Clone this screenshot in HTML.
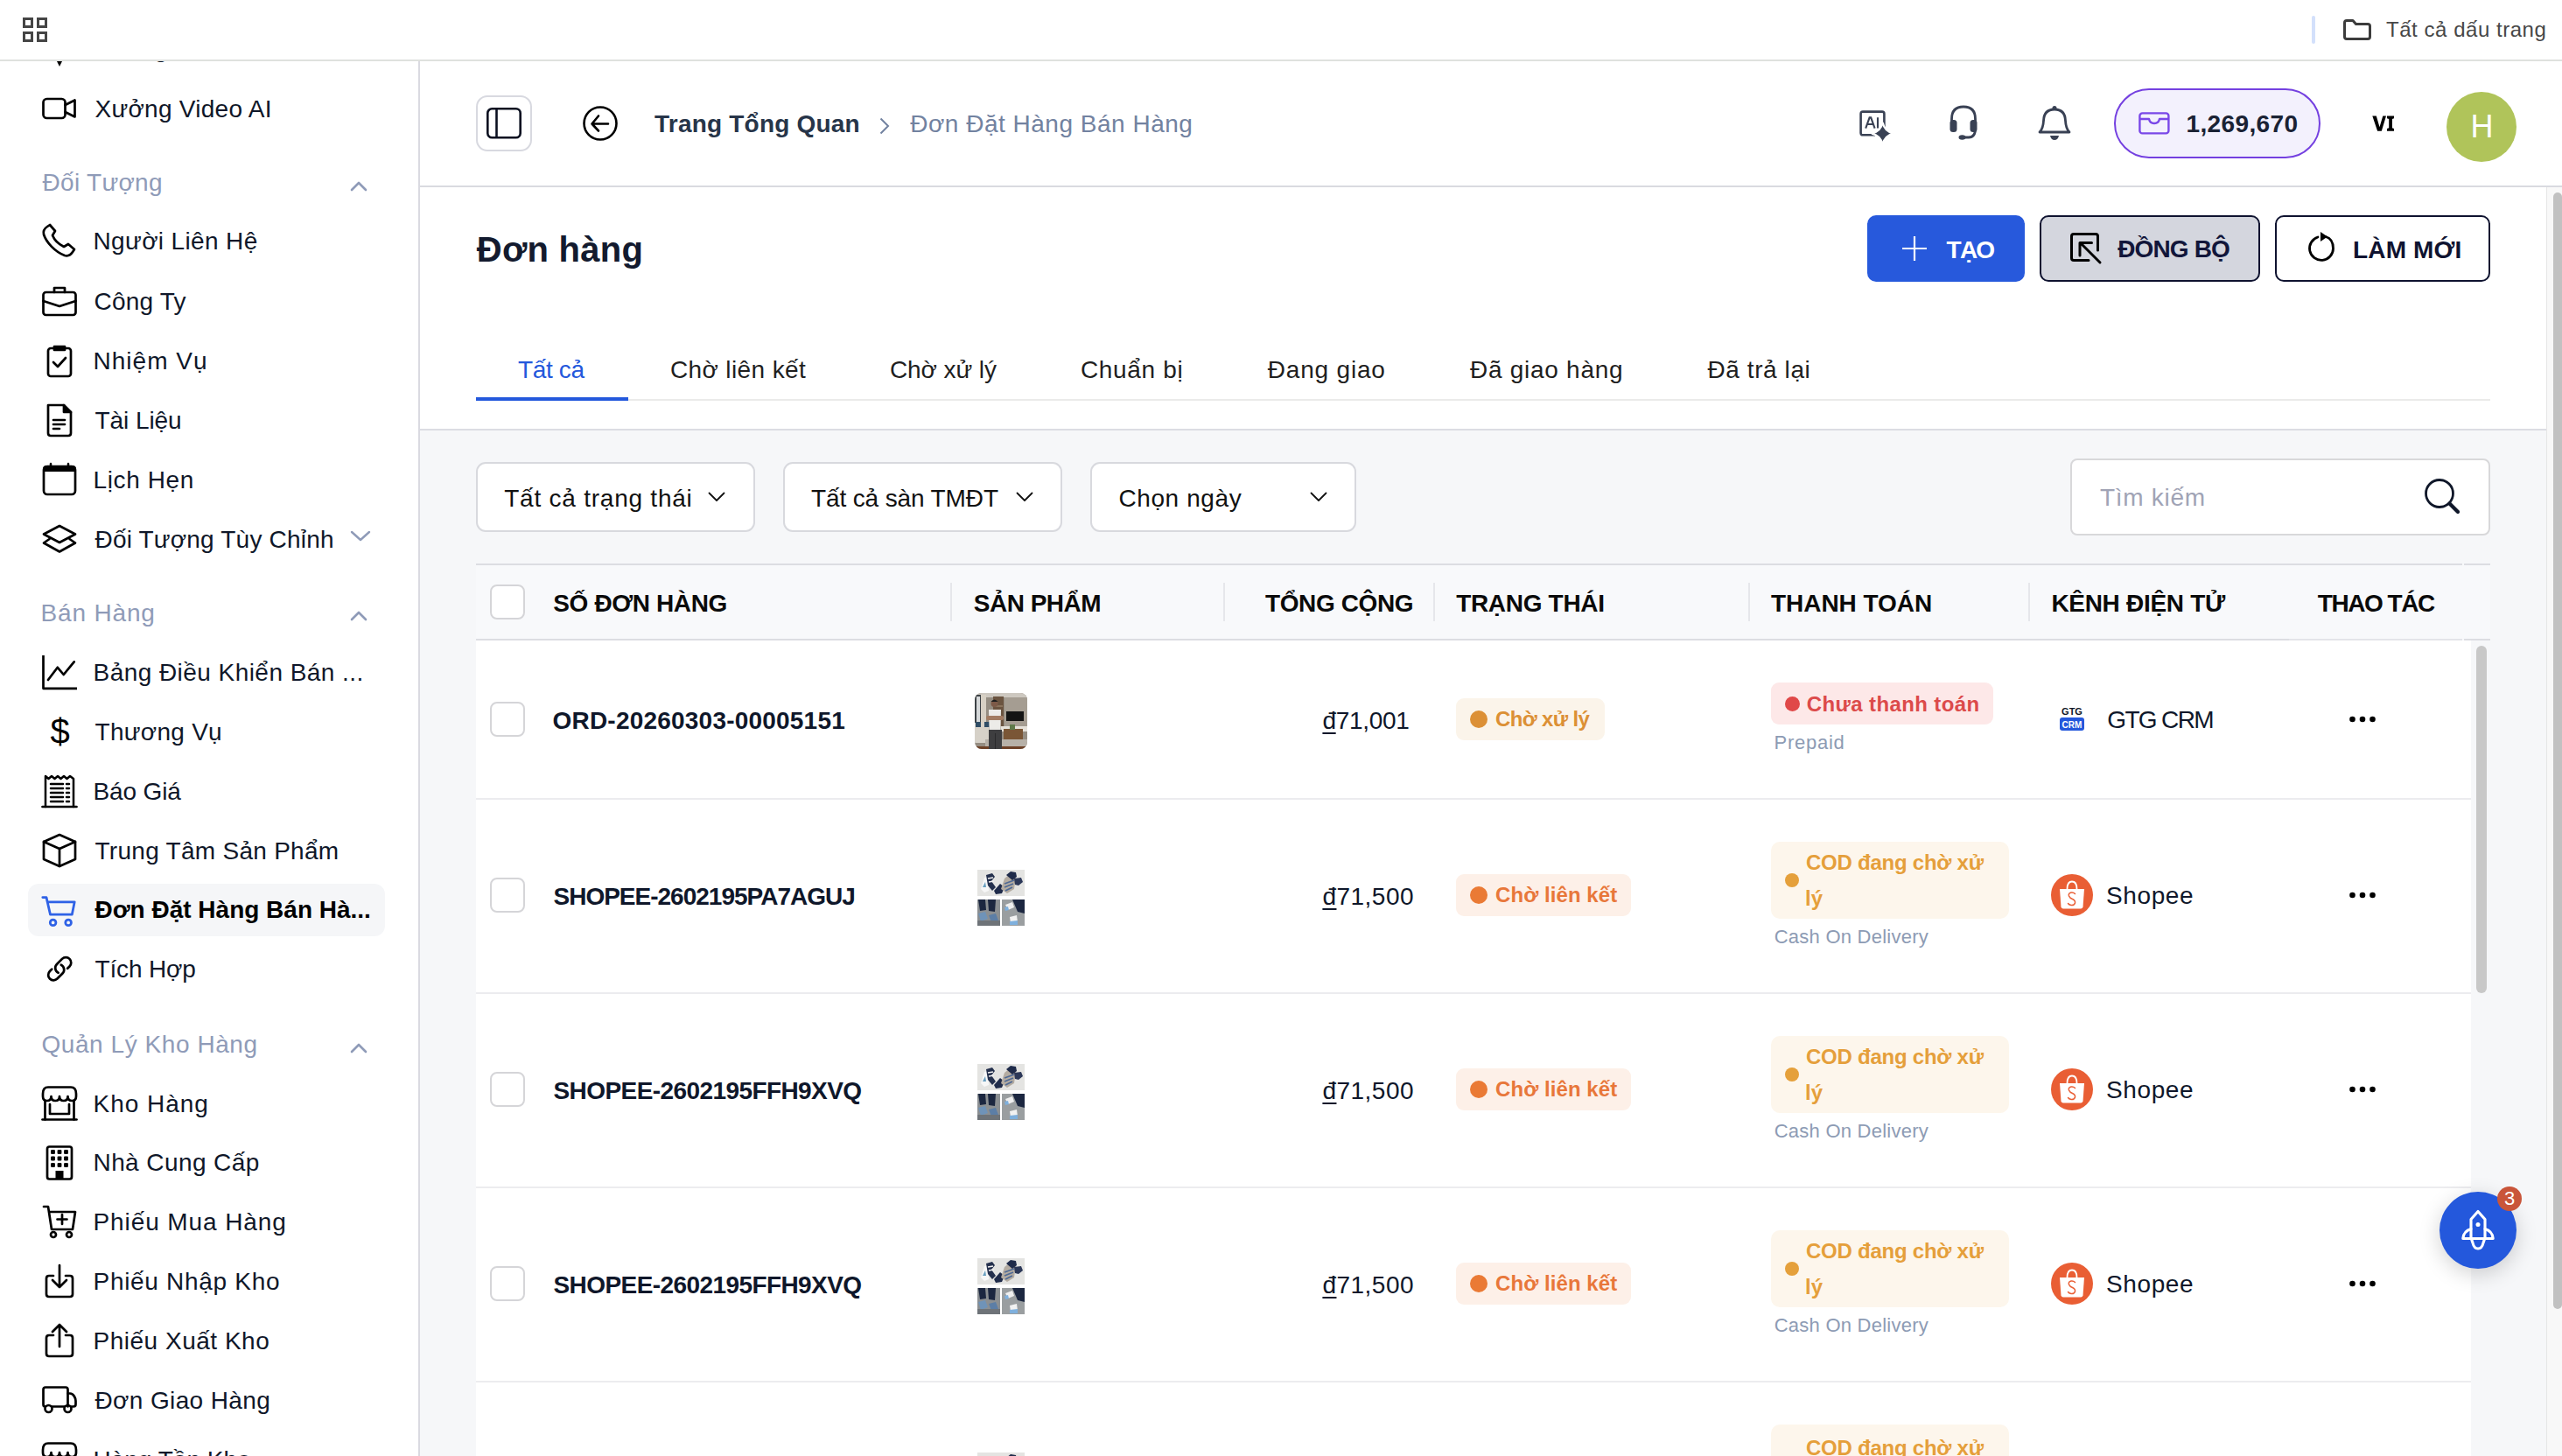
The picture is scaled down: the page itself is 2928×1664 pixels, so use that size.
<!DOCTYPE html>
<html><head><meta charset="utf-8"><title>Đơn hàng</title>
<style>html,body{margin:0;padding:0;width:2928px;height:1664px;overflow:hidden;background:#fff;} span{display:block;}</style>
</head><body><div style="position:relative;width:2928px;height:1664px;overflow:hidden;">
<div style="position:absolute;left:0px;top:0px;width:2928px;height:1664px;background:#ffffff;"></div>
<div style="position:absolute;left:480px;top:492px;width:2430px;height:1172px;background:#f6f7f9;"></div>
<svg style="position:absolute;left:62px;top:64px;overflow:visible;" width="12" height="13" viewBox="0 0 12 13"><path d="M0 0 H12 L6 12 Z" fill="#000"/></svg>
<div style="position:absolute;left:32px;top:1010px;width:408px;height:60px;background:#f5f6f8;border-radius:12px;"></div>
<span id="sb0" style="position:absolute;top:42.30px;font:400 28px/28px 'Liberation Sans', sans-serif;color:#0f1729;white-space:nowrap;letter-spacing:0.000px;left:107.50px;">Quảng Cáo</span>
<span id="sb1" style="position:absolute;top:110.60px;font:400 28px/28px 'Liberation Sans', sans-serif;color:#0f1729;white-space:nowrap;letter-spacing:0.264px;left:108.50px;">Xưởng Video AI</span>
<svg style="position:absolute;left:48px;top:103.80000000000001px;overflow:visible;" width="40" height="40" viewBox="0 0 40 40"><g fill="none" stroke="#000" stroke-width="2.7" stroke-linecap="round" stroke-linejoin="round"><rect x="1.5" y="9" width="25" height="22" rx="4"/><path d="M26.5 16 L37.5 10.5 L37.5 29.5 L26.5 24"/></g></svg>
<span id="sb2" style="position:absolute;top:194.90px;font:400 28px/28px 'Liberation Sans', sans-serif;color:#8f9bb8;white-space:nowrap;letter-spacing:0.303px;left:48.50px;">Đối Tượng</span>
<svg style="position:absolute;left:400px;top:206.6px;overflow:visible;" width="20" height="12" viewBox="0 0 20 12"><path d="M2 10 L10 2 L18 10" fill="none" stroke="#8f9bb8" stroke-width="2.6" stroke-linecap="round" stroke-linejoin="round"/></svg>
<span id="sb3" style="position:absolute;top:262.00px;font:400 28px/28px 'Liberation Sans', sans-serif;color:#0f1729;white-space:nowrap;letter-spacing:0.364px;left:106.50px;">Người Liên Hệ</span>
<svg style="position:absolute;left:48px;top:255.2px;overflow:visible;" width="40" height="40" viewBox="0 0 40 40"><g fill="none" stroke="#000" stroke-width="2.7" stroke-linecap="round" stroke-linejoin="round"><path d="M6 4 C3 6 1 9 2 13 C5 22 15 33 26 37 C30 38 33 36 35 33 L37 30 L30 24 L25 27 C19 24 14 19 12 14 L15 9 L9 2 Z"/></g></svg>
<span id="sb4" style="position:absolute;top:330.60px;font:400 28px/28px 'Liberation Sans', sans-serif;color:#0f1729;white-space:nowrap;letter-spacing:0.187px;left:107.50px;">Công Ty</span>
<svg style="position:absolute;left:48px;top:323.8px;overflow:visible;" width="40" height="40" viewBox="0 0 40 40"><g fill="none" stroke="#000" stroke-width="2.7" stroke-linecap="round" stroke-linejoin="round"><rect x="1.5" y="10" width="37" height="26" rx="3"/><path d="M14 10 V5 H26 V10"/><path d="M1.5 20 L20 26 L38.5 20"/></g></svg>
<span id="sb5" style="position:absolute;top:399.00px;font:400 28px/28px 'Liberation Sans', sans-serif;color:#0f1729;white-space:nowrap;letter-spacing:1.019px;left:106.50px;">Nhiệm Vụ</span>
<svg style="position:absolute;left:48px;top:392.2px;overflow:visible;" width="40" height="40" viewBox="0 0 40 40"><g fill="none" stroke="#000" stroke-width="2.7" stroke-linecap="round" stroke-linejoin="round"><rect x="7" y="6" width="26" height="32" rx="3"/><path d="M14 4 H26 V8 H14 Z" fill="#000"/><path d="M13 22 L18 27 L27 17"/></g></svg>
<span id="sb6" style="position:absolute;top:466.70px;font:400 28px/28px 'Liberation Sans', sans-serif;color:#0f1729;white-space:nowrap;letter-spacing:-0.063px;left:108.50px;">Tài Liệu</span>
<svg style="position:absolute;left:48px;top:459.9px;overflow:visible;" width="40" height="40" viewBox="0 0 40 40"><g fill="none" stroke="#000" stroke-width="2.7" stroke-linecap="round" stroke-linejoin="round"><path d="M7 3 H25 L33 11 V35 Q33 38 30 38 H10 Q7 38 7 35 Z"/><path d="M25 3 V11 H33" fill="#000"/><path d="M13 20 H26 M13 25 H26 M13 30 H20"/></g></svg>
<span id="sb7" style="position:absolute;top:534.90px;font:400 28px/28px 'Liberation Sans', sans-serif;color:#0f1729;white-space:nowrap;letter-spacing:0.623px;left:106.50px;">Lịch Hẹn</span>
<svg style="position:absolute;left:48px;top:528.1px;overflow:visible;" width="40" height="40" viewBox="0 0 40 40"><g fill="none" stroke="#000" stroke-width="2.7" stroke-linecap="round" stroke-linejoin="round"><rect x="2" y="5" width="36" height="32" rx="4"/><path d="M2 8 Q2 5 5 5 H35 Q38 5 38 8 V10 H2 Z" fill="#000" stroke-width="2"/><path d="M10 2 V6 M30 2 V6" stroke-width="2.5"/></g></svg>
<span id="sb8" style="position:absolute;top:602.60px;font:400 28px/28px 'Liberation Sans', sans-serif;color:#0f1729;white-space:nowrap;letter-spacing:0.191px;left:108.50px;">Đối Tượng Tùy Chỉnh</span>
<svg style="position:absolute;left:48px;top:595.8px;overflow:visible;" width="40" height="40" viewBox="0 0 40 40"><g fill="none" stroke="#000" stroke-width="2.7" stroke-linecap="round" stroke-linejoin="round"><path d="M20 5 L38 14.5 L20 24 L2 14.5 Z"/><path d="M8.5 20 L2 24.5 L20 34.5 L38 24.5 L31.5 20"/></g></svg>
<span id="sb9" style="position:absolute;top:686.70px;font:400 28px/28px 'Liberation Sans', sans-serif;color:#8f9bb8;white-space:nowrap;letter-spacing:0.834px;left:46.50px;">Bán Hàng</span>
<svg style="position:absolute;left:400px;top:698.4px;overflow:visible;" width="20" height="12" viewBox="0 0 20 12"><path d="M2 10 L10 2 L18 10" fill="none" stroke="#8f9bb8" stroke-width="2.6" stroke-linecap="round" stroke-linejoin="round"/></svg>
<span id="sb10" style="position:absolute;top:755.40px;font:400 28px/28px 'Liberation Sans', sans-serif;color:#0f1729;white-space:nowrap;letter-spacing:0.451px;left:106.50px;">Bảng Điều Khiển Bán ...</span>
<svg style="position:absolute;left:48px;top:748.6px;overflow:visible;" width="40" height="40" viewBox="0 0 40 40"><g fill="none" stroke="#000" stroke-width="2.7" stroke-linecap="round" stroke-linejoin="round"><path d="M1.5 0 V37.8 H40" stroke-linecap="butt"/><path d="M7 28 L17.8 13.8 L24.7 22 L36.7 7.4"/></g></svg>
<span id="sb11" style="position:absolute;top:823.20px;font:400 28px/28px 'Liberation Sans', sans-serif;color:#0f1729;white-space:nowrap;letter-spacing:0.277px;left:108.50px;">Thương Vụ</span>
<span id="sbd11" style="position:absolute;top:816.04px;font:400 40px/40px 'Liberation Sans', sans-serif;color:#000;white-space:nowrap;letter-spacing:0.000px;left:68.50px;transform:translateX(-50%);">$</span>
<span id="sb12" style="position:absolute;top:891.00px;font:400 28px/28px 'Liberation Sans', sans-serif;color:#0f1729;white-space:nowrap;letter-spacing:-0.150px;left:106.50px;">Báo Giá</span>
<svg style="position:absolute;left:48px;top:884.2px;overflow:visible;" width="40" height="40" viewBox="0 0 40 40"><g fill="none" stroke="#000" stroke-width="2.7" stroke-linecap="round" stroke-linejoin="round"><path d="M0.5 38 H39.5" /><path d="M4 38 V3 L7.5 6 L11 3 L14.5 6 L18 3 L21.5 6 L25 3 L28.5 6 L32 3 L36 6 V38" stroke-width="2.5"/><path d="M10 12 H24 M10 17 H24 M10 22 H24 M10 27 H24 M10 32 H24 M28 12 H31 M28 17 H31 M28 22 H31 M28 27 H31 M28 32 H31" stroke-width="2.5"/></g></svg>
<span id="sb13" style="position:absolute;top:958.80px;font:400 28px/28px 'Liberation Sans', sans-serif;color:#0f1729;white-space:nowrap;letter-spacing:0.277px;left:108.50px;">Trung Tâm Sản Phẩm</span>
<svg style="position:absolute;left:48px;top:952.0px;overflow:visible;" width="40" height="40" viewBox="0 0 40 40"><g fill="none" stroke="#000" stroke-width="2.7" stroke-linecap="round" stroke-linejoin="round"><path d="M20 2 L38 10 V30 L20 38 L2 30 V10 Z"/><path d="M2 10 L20 18 L38 10 M20 18 V38"/></g></svg>
<span id="sb14" style="position:absolute;top:1026.00px;font:700 28px/28px 'Liberation Sans', sans-serif;color:#000;white-space:nowrap;letter-spacing:-0.005px;left:108.50px;">Đơn Đặt Hàng Bán Hà...</span>
<svg style="position:absolute;left:48px;top:1019.2px;overflow:visible;" width="40" height="40" viewBox="0 0 40 40"><g fill="none" stroke="#2f62e6" stroke-width="2.8" stroke-linecap="round" stroke-linejoin="round"><path d="M0.8 6.6 H5 L9.5 26.2 H34.3 L37.2 11.8 H6.2"/><circle cx="12.6" cy="35.4" r="3.3"/><circle cx="30.1" cy="35.4" r="3.3"/></g></svg>
<span id="sb15" style="position:absolute;top:1094.30px;font:400 28px/28px 'Liberation Sans', sans-serif;color:#0f1729;white-space:nowrap;letter-spacing:-0.145px;left:108.50px;">Tích Hợp</span>
<svg style="position:absolute;left:48px;top:1087.5px;overflow:visible;" width="40" height="40" viewBox="0 0 40 40"><g fill="none" stroke="#000" stroke-width="2.7" stroke-linecap="round" stroke-linejoin="round"><g transform="translate(20.2 19.2) scale(1.34) translate(-12 -12)" stroke-width="2.05"><path d="M13.19 8.688a4.5 4.5 0 0 1 1.242 7.244l-4.5 4.5a4.5 4.5 0 0 1-6.364-6.364l1.757-1.757m13.35-.622 1.757-1.757a4.5 4.5 0 0 0-6.364-6.364l-4.5 4.5a4.5 4.5 0 0 0 1.242 7.244"/></g></g></svg>
<span id="sb16" style="position:absolute;top:1180.30px;font:400 28px/28px 'Liberation Sans', sans-serif;color:#8f9bb8;white-space:nowrap;letter-spacing:0.561px;left:47.50px;">Quản Lý Kho Hàng</span>
<svg style="position:absolute;left:400px;top:1192px;overflow:visible;" width="20" height="12" viewBox="0 0 20 12"><path d="M2 10 L10 2 L18 10" fill="none" stroke="#8f9bb8" stroke-width="2.6" stroke-linecap="round" stroke-linejoin="round"/></svg>
<span id="sb17" style="position:absolute;top:1247.60px;font:400 28px/28px 'Liberation Sans', sans-serif;color:#0f1729;white-space:nowrap;letter-spacing:0.976px;left:106.50px;">Kho Hàng</span>
<svg style="position:absolute;left:48px;top:1240.8px;overflow:visible;" width="40" height="40" viewBox="0 0 40 40"><g fill="none" stroke="#000" stroke-width="2.7" stroke-linecap="round" stroke-linejoin="round"><path d="M0.5 38.5 H39.5"/><path d="M3.5 17 V38.5 M36.5 17 V38.5"/><path d="M9 21 V32 H31 V21"/><path d="M7 1.5 H33 Q39 1.5 39 9 V12 Q39 17 34.25 17 Q29.5 17 29.5 12 Q29.5 17 24.75 17 Q20 17 20 12 Q20 17 15.25 17 Q10.5 17 10.5 12 Q10.5 17 5.75 17 Q1 17 1 12 V9 Q1 1.5 7 1.5 Z"/></g></svg>
<span id="sb18" style="position:absolute;top:1315.30px;font:400 28px/28px 'Liberation Sans', sans-serif;color:#0f1729;white-space:nowrap;letter-spacing:0.413px;left:106.50px;">Nhà Cung Cấp</span>
<svg style="position:absolute;left:48px;top:1308.5px;overflow:visible;" width="40" height="40" viewBox="0 0 40 40"><g fill="none" stroke="#000" stroke-width="2.7" stroke-linecap="round" stroke-linejoin="round"><rect x="6" y="1.5" width="28" height="37" rx="2.5"/><g fill="#000" stroke="none"><rect x="10.1" y="5.1" width="4.8" height="4.8" rx="1"/><rect x="17.6" y="5.1" width="4.8" height="4.8" rx="1"/><rect x="25.1" y="5.1" width="4.8" height="4.8" rx="1"/><rect x="10.1" y="12.6" width="4.8" height="4.8" rx="1"/><rect x="17.6" y="12.6" width="4.8" height="4.8" rx="1"/><rect x="25.1" y="12.6" width="4.8" height="4.8" rx="1"/><rect x="10.1" y="20.1" width="4.8" height="4.8" rx="1"/><rect x="17.6" y="20.1" width="4.8" height="4.8" rx="1"/><rect x="25.1" y="20.1" width="4.8" height="4.8" rx="1"/><rect x="15.5" y="29" width="9" height="10"/></g></g></svg>
<span id="sb19" style="position:absolute;top:1383.30px;font:400 28px/28px 'Liberation Sans', sans-serif;color:#0f1729;white-space:nowrap;letter-spacing:0.900px;left:106.50px;">Phiếu Mua Hàng</span>
<svg style="position:absolute;left:48px;top:1376.5px;overflow:visible;" width="40" height="40" viewBox="0 0 40 40"><g fill="none" stroke="#000" stroke-width="2.7" stroke-linecap="round" stroke-linejoin="round"><path d="M2 2 H7 L11 28 H35 L38 8 H8"/><circle cx="13" cy="34" r="3"/><circle cx="31" cy="34" r="3"/><path d="M23 11 V22 M17.5 16.5 H28.5"/></g></svg>
<span id="sb20" style="position:absolute;top:1451.00px;font:400 28px/28px 'Liberation Sans', sans-serif;color:#0f1729;white-space:nowrap;letter-spacing:0.703px;left:106.50px;">Phiếu Nhập Kho</span>
<svg style="position:absolute;left:48px;top:1444.2px;overflow:visible;" width="40" height="40" viewBox="0 0 40 40"><g fill="none" stroke="#000" stroke-width="2.7" stroke-linecap="round" stroke-linejoin="round"><path d="M13 14 H8 Q5 14 5 17 V35 Q5 38 8 38 H32 Q35 38 35 35 V17 Q35 14 32 14 H27"/><path d="M20 2 V27 M12 19 L20 27 L28 19"/></g></svg>
<span id="sb21" style="position:absolute;top:1518.60px;font:400 28px/28px 'Liberation Sans', sans-serif;color:#0f1729;white-space:nowrap;letter-spacing:0.514px;left:106.50px;">Phiếu Xuất Kho</span>
<svg style="position:absolute;left:48px;top:1511.8px;overflow:visible;" width="40" height="40" viewBox="0 0 40 40"><g fill="none" stroke="#000" stroke-width="2.7" stroke-linecap="round" stroke-linejoin="round"><path d="M13 14 H8 Q5 14 5 17 V35 Q5 38 8 38 H32 Q35 38 35 35 V17 Q35 14 32 14 H27"/><path d="M20 27 V2 M12 10 L20 2 L28 10"/></g></svg>
<span id="sb22" style="position:absolute;top:1586.60px;font:400 28px/28px 'Liberation Sans', sans-serif;color:#0f1729;white-space:nowrap;letter-spacing:0.373px;left:108.50px;">Đơn Giao Hàng</span>
<svg style="position:absolute;left:48px;top:1579.8px;overflow:visible;" width="40" height="40" viewBox="0 0 40 40"><g fill="none" stroke="#000" stroke-width="2.7" stroke-linecap="round" stroke-linejoin="round"><path d="M3.5 27.5 Q1.5 27.5 1.5 25 V8 Q1.5 5.5 4 5.5 H27 Q29.5 5.5 29.5 8 V27.5"/><path d="M29.5 12.5 H32 Q35 12.5 37 16 Q38.5 18.5 38.5 21 V25 Q38.5 27.5 36 27.5 H34"/><path d="M11.5 27.5 H25.5"/><circle cx="7.5" cy="30" r="4"/><circle cx="29.5" cy="30" r="4"/></g></svg>
<span id="sb23" style="position:absolute;top:1654.60px;font:400 28px/28px 'Liberation Sans', sans-serif;color:#0f1729;white-space:nowrap;letter-spacing:0.000px;left:106.50px;">Hàng Tồn Kho</span>
<svg style="position:absolute;left:48px;top:1647.8px;overflow:visible;" width="40" height="40" viewBox="0 0 40 40"><g fill="none" stroke="#000" stroke-width="2.7" stroke-linecap="round" stroke-linejoin="round"><path d="M0.5 38.5 H39.5"/><path d="M3.5 17 V38.5 M36.5 17 V38.5"/><path d="M9 21 V32 H31 V21"/><path d="M7 1.5 H33 Q39 1.5 39 9 V12 Q39 17 34.25 17 Q29.5 17 29.5 12 Q29.5 17 24.75 17 Q20 17 20 12 Q20 17 15.25 17 Q10.5 17 10.5 12 Q10.5 17 5.75 17 Q1 17 1 12 V9 Q1 1.5 7 1.5 Z"/></g></svg>
<svg style="position:absolute;left:400px;top:606px;overflow:visible;" width="24" height="14" viewBox="0 0 24 14"><path d="M2 2 L12 11 L22 2" fill="none" stroke="#8f9bb8" stroke-width="2.4" stroke-linecap="round" stroke-linejoin="round"/></svg>
<div style="position:absolute;left:478px;top:70px;width:2px;height:1594px;background:#dadae1;"></div>
<div style="position:absolute;left:0px;top:0px;width:2928px;height:68px;background:#ffffff;z-index:5;"></div>
<div style="position:absolute;left:0px;top:68px;width:2928px;height:2px;background:#dfe1de;z-index:5;"></div>
<svg style="position:absolute;left:26px;top:20px;overflow:visible;z-index:6;" width="29" height="29" viewBox="0 0 29 29"><g fill="none" stroke="#454545" stroke-width="3"><rect x="1.5" y="1.5" width="9" height="9"/><rect x="17.5" y="1.5" width="9" height="9"/><rect x="1.5" y="17.5" width="9" height="9"/><rect x="17.5" y="17.5" width="9" height="9"/></g></svg>
<div style="position:absolute;left:2642px;top:18px;width:4px;height:32px;background:#d3e0fb;border-radius:2px;z-index:6;"></div>
<svg style="position:absolute;left:2678px;top:22px;overflow:visible;z-index:6;" width="32" height="24" viewBox="0 0 32 24"><path d="M1.5 4 Q1.5 1.5 4 1.5 H11 L14.5 5.5 H28 Q30.5 5.5 30.5 8 V20 Q30.5 22.5 28 22.5 H4 Q1.5 22.5 1.5 20 Z" fill="none" stroke="#3c3c3c" stroke-width="3" stroke-linejoin="round"/></svg>
<span id="bm" style="position:absolute;top:21.88px;font:400 24px/24px 'Liberation Sans', sans-serif;color:#474747;white-space:nowrap;letter-spacing:0.538px;z-index:6;left:2727.00px;">Tất cả dấu trang</span>
<div style="position:absolute;left:480px;top:212px;width:2448px;height:2px;background:#d9dae0;"></div>
<div style="position:absolute;left:544px;top:109px;width:64px;height:64px;background:#fff;box-sizing:border-box;border:2px solid #d8d9e0;border-radius:13px;"></div>
<svg style="position:absolute;left:556px;top:123px;overflow:visible;" width="40" height="36" viewBox="0 0 40 36"><g fill="none" stroke="#0b1020" stroke-width="2.6"><rect x="1.3" y="1.3" width="37.4" height="33" rx="5"/><path d="M11.5 1.5 V34.5"/></g></svg>
<svg style="position:absolute;left:666px;top:121px;overflow:visible;" width="40" height="40" viewBox="0 0 40 40"><g fill="none" stroke="#000" stroke-width="2.6" stroke-linecap="round" stroke-linejoin="round"><circle cx="20" cy="20" r="18.5"/><path d="M29 20.5 H11 M18 11.5 L10.5 20.5 L18 28.5"/></g></svg>
<span id="bc1" style="position:absolute;top:128.10px;font:700 28px/28px 'Liberation Sans', sans-serif;color:#273549;white-space:nowrap;letter-spacing:0.210px;left:748.00px;">Trang Tổng Quan</span>
<svg style="position:absolute;left:1005px;top:134px;overflow:visible;" width="12" height="20" viewBox="0 0 12 20"><path d="M1.5 1.5 L10 10 L1.5 18.5" fill="none" stroke="#7282a0" stroke-width="2"/></svg>
<span id="bc2" style="position:absolute;top:128.20px;font:400 28px/28px 'Liberation Sans', sans-serif;color:#7282a0;white-space:nowrap;letter-spacing:0.507px;left:1040.20px;">Đơn Đặt Hàng Bán Hàng</span>
<svg style="position:absolute;left:2124px;top:125px;overflow:visible;" width="40" height="40" viewBox="0 0 40 40"><g fill="none" stroke="#394154" stroke-width="2.6" stroke-linejoin="round"><path d="M19 29.3 H5 Q2.6 29.3 2.6 27 V5 Q2.6 2.6 5 2.6 H27 Q29.4 2.6 29.4 5 V20"/></g><path d="M8.2 21.6 L12.6 9.3 H14.2 L18.6 21.6 M9.9 17 H16.9 M22 9.3 V21.6" fill="none" stroke="#394154" stroke-width="2.1"/><path d="M27.6 15 Q29.8 25.4 40.2 27.6 Q29.8 29.8 27.6 40.2 Q25.4 29.8 15 27.6 Q25.4 25.4 27.6 15 Z" fill="#394154" stroke="#fff" stroke-width="2.2"/></svg>
<svg style="position:absolute;left:2228px;top:120px;overflow:visible;" width="32" height="42" viewBox="0 0 32 42"><g fill="none" stroke="#394154" stroke-width="2.8" stroke-linecap="round"><path d="M2.5 27 V16 Q2.5 2 16 2 Q29.5 2 29.5 16 V27"/><path d="M29.5 27 Q29.5 37 22 37 H15"/></g><rect x="0.5" y="17" width="8" height="14" rx="3.5" fill="#394154"/><rect x="23.5" y="17" width="8" height="14" rx="3.5" fill="#394154"/><ellipse cx="14.5" cy="37" rx="4" ry="2.8" fill="#394154"/></svg>
<svg style="position:absolute;left:2329px;top:120px;overflow:visible;" width="38" height="42" viewBox="0 0 38 42"><g fill="none" stroke="#394154" stroke-width="2.8" stroke-linejoin="round"><path d="M2 31 Q6 27 6.5 18 Q7 5 19 5 Q31 5 31.5 18 Q32 27 36 31 Z"/></g><circle cx="19" cy="3.5" r="2.5" fill="#394154"/><path d="M14 35 H24 Q23 40 19 40 Q15 40 14 35 Z" fill="#394154"/></svg>
<div style="position:absolute;left:2416px;top:101px;width:236px;height:80px;background:#f3f1fd;box-sizing:border-box;border:2px solid #7440e0;border-radius:40px;"></div>
<svg style="position:absolute;left:2444px;top:128px;overflow:visible;" width="36" height="26" viewBox="0 0 36 26"><g fill="none" stroke="#7a48e8" stroke-width="2.4" stroke-linejoin="round"><rect x="1.4" y="1.4" width="33" height="23" rx="3"/><path d="M1.4 8 H12 Q13 13 18 13 Q23 13 24 8 H34.4"/></g></svg>
<span id="wal" style="position:absolute;top:128.30px;font:700 28px/28px 'Liberation Sans', sans-serif;color:#1a2234;white-space:nowrap;letter-spacing:0.363px;left:2498.50px;">1,269,670</span>
<svg style="position:absolute;left:2710px;top:131px;overflow:visible;" width="28" height="20" viewBox="0 0 28 20"><path d="M1.3 1.4 H5.8 L9.5 14.2 L13.3 1.4 H17 L11.8 18.8 H7.1 Z M18 1.4 H26 V4.2 L23.9 5 V15.3 L26 16.1 V18.8 H18 V16.1 L20.2 15.3 V5 L18 4.2 Z" fill="#000"/></svg>
<div style="position:absolute;left:2796px;top:105px;width:80px;height:80px;background:#b0c45a;border-radius:50%;"></div>
<span id="avh" style="position:absolute;top:126.83px;font:400 36px/36px 'Liberation Sans', sans-serif;color:#fff;white-space:nowrap;letter-spacing:0.000px;left:2823.40px;">H</span>
<div style="position:absolute;left:480px;top:490px;width:2430px;height:2px;background:#dcdde3;"></div>
<span id="title" style="position:absolute;top:265.04px;font:700 40px/40px 'Liberation Sans', sans-serif;color:#131a2e;white-space:nowrap;letter-spacing:0.231px;left:544.80px;">Đơn hàng</span>
<div style="position:absolute;left:2134px;top:246px;width:180px;height:76px;background:#2759dc;border-radius:10px;"></div>
<svg style="position:absolute;left:2173px;top:269px;overflow:visible;" width="30" height="30" viewBox="0 0 30 30"><path d="M15 1 V29 M1 15 H29" stroke="#fff" stroke-width="2.2"/></svg>
<span id="btn1" style="position:absolute;top:271.80px;font:700 28px/28px 'Liberation Sans', sans-serif;color:#fff;white-space:nowrap;letter-spacing:-1.812px;left:2224.60px;">TẠO</span>
<div style="position:absolute;left:2331px;top:246px;width:252px;height:76px;background:#d4d6de;box-sizing:border-box;border:2px solid #0f1330;border-radius:10px;"></div>
<svg style="position:absolute;left:2366px;top:266px;overflow:visible;" width="36" height="36" viewBox="0 0 36 36"><g fill="none" stroke="#000" stroke-width="3" stroke-linecap="round" stroke-linejoin="round"><path d="M21 31.5 H4 Q1.5 31.5 1.5 29 V4 Q1.5 1.5 4 1.5 H29 Q31.5 1.5 31.5 4 V20"/><path d="M34 34 L12 12 M11 26 V11.5 H24.5"/></g></svg>
<span id="btn2" style="position:absolute;top:271.20px;font:700 28px/28px 'Liberation Sans', sans-serif;color:#12163a;white-space:nowrap;letter-spacing:-0.867px;left:2420.20px;">ĐỒNG BỘ</span>
<div style="position:absolute;left:2600px;top:246px;width:246px;height:76px;background:#ffffff;box-sizing:border-box;border:2px solid #0f1330;border-radius:10px;"></div>
<svg style="position:absolute;left:2637px;top:264px;overflow:visible;" width="32" height="36" viewBox="0 0 32 36"><g fill="none" stroke="#000" stroke-width="2.8" stroke-linecap="round"><path d="M21 6.5 Q29.5 9 29.5 20 A13.5 13.5 0 1 1 12 7"/></g><path d="M15 1 L23 6.5 L15 12 Z" fill="#000"/></svg>
<span id="btn3" style="position:absolute;top:271.80px;font:700 28px/28px 'Liberation Sans', sans-serif;color:#0f1330;white-space:nowrap;letter-spacing:0.161px;left:2689.00px;">LÀM MỚI</span>
<div style="position:absolute;left:544px;top:456px;width:2302px;height:2px;background:#ebebea;"></div>
<div style="position:absolute;left:544px;top:454px;width:174px;height:4px;background:#2458dc;"></div>
<span id="tab0" style="position:absolute;top:409.10px;font:400 28px/28px 'Liberation Sans', sans-serif;color:#2458dc;white-space:nowrap;letter-spacing:-0.347px;left:592.00px;">Tất cả</span>
<span id="tab1" style="position:absolute;top:409.10px;font:400 28px/28px 'Liberation Sans', sans-serif;color:#1f1f1f;white-space:nowrap;letter-spacing:0.384px;left:765.90px;">Chờ liên kết</span>
<span id="tab2" style="position:absolute;top:409.10px;font:400 28px/28px 'Liberation Sans', sans-serif;color:#1f1f1f;white-space:nowrap;letter-spacing:-0.085px;left:1016.90px;">Chờ xử lý</span>
<span id="tab3" style="position:absolute;top:409.10px;font:400 28px/28px 'Liberation Sans', sans-serif;color:#1f1f1f;white-space:nowrap;letter-spacing:0.648px;left:1235.00px;">Chuẩn bị</span>
<span id="tab4" style="position:absolute;top:409.10px;font:400 28px/28px 'Liberation Sans', sans-serif;color:#1f1f1f;white-space:nowrap;letter-spacing:0.802px;left:1448.80px;">Đang giao</span>
<span id="tab5" style="position:absolute;top:409.10px;font:400 28px/28px 'Liberation Sans', sans-serif;color:#1f1f1f;white-space:nowrap;letter-spacing:0.727px;left:1680.00px;">Đã giao hàng</span>
<span id="tab6" style="position:absolute;top:409.10px;font:400 28px/28px 'Liberation Sans', sans-serif;color:#1f1f1f;white-space:nowrap;letter-spacing:0.598px;left:1951.40px;">Đã trả lại</span>
<div style="position:absolute;left:544px;top:528px;width:319px;height:80px;background:#ffffff;box-sizing:border-box;border:2px solid #d8d9de;border-radius:11px;"></div>
<span id="f1" style="position:absolute;top:555.50px;font:400 28px/28px 'Liberation Sans', sans-serif;color:#111111;white-space:nowrap;letter-spacing:0.768px;left:576.20px;">Tất cả trạng thái</span>
<svg style="position:absolute;left:809px;top:562px;overflow:visible;" width="20" height="12" viewBox="0 0 20 12"><path d="M1.5 1.5 L10 10 L18.5 1.5" fill="none" stroke="#111" stroke-width="1.8" stroke-linecap="round" stroke-linejoin="round"/></svg>
<div style="position:absolute;left:895px;top:528px;width:319px;height:80px;background:#ffffff;box-sizing:border-box;border:2px solid #d8d9de;border-radius:11px;"></div>
<span id="f2" style="position:absolute;top:555.50px;font:400 28px/28px 'Liberation Sans', sans-serif;color:#111111;white-space:nowrap;letter-spacing:-0.126px;left:927.00px;">Tất cả sàn TMĐT</span>
<svg style="position:absolute;left:1160.5px;top:562px;overflow:visible;" width="20" height="12" viewBox="0 0 20 12"><path d="M1.5 1.5 L10 10 L18.5 1.5" fill="none" stroke="#111" stroke-width="1.8" stroke-linecap="round" stroke-linejoin="round"/></svg>
<div style="position:absolute;left:1246px;top:528px;width:304px;height:80px;background:#ffffff;box-sizing:border-box;border:2px solid #d8d9de;border-radius:11px;"></div>
<span id="f3" style="position:absolute;top:555.50px;font:400 28px/28px 'Liberation Sans', sans-serif;color:#111111;white-space:nowrap;letter-spacing:0.608px;left:1278.40px;">Chọn ngày</span>
<svg style="position:absolute;left:1496.5px;top:562px;overflow:visible;" width="20" height="12" viewBox="0 0 20 12"><path d="M1.5 1.5 L10 10 L18.5 1.5" fill="none" stroke="#111" stroke-width="1.8" stroke-linecap="round" stroke-linejoin="round"/></svg>
<div style="position:absolute;left:2366px;top:524px;width:480px;height:88px;background:#ffffff;box-sizing:border-box;border:2px solid #d8d8da;border-radius:8px;"></div>
<span id="srch" style="position:absolute;top:555.10px;font:400 28px/28px 'Liberation Sans', sans-serif;color:#a0a3b5;white-space:nowrap;letter-spacing:0.703px;left:2400.00px;">Tìm kiếm</span>
<svg style="position:absolute;left:2770px;top:546px;overflow:visible;" width="44" height="44" viewBox="0 0 44 44"><g fill="none" stroke="#0f1729" stroke-linecap="round"><circle cx="18" cy="18" r="15.5" stroke-width="2.8"/><path d="M29.5 29.5 L39 39" stroke-width="4.2"/></g></svg>
<div style="position:absolute;left:544px;top:644px;width:2302px;height:88px;background:#f8f9fb;"></div>
<div style="position:absolute;left:544px;top:644px;width:2270px;height:2px;background:#dcdde2;"></div>
<div style="position:absolute;left:2816px;top:644px;width:30px;height:2px;background:#dcdde2;"></div>
<div style="position:absolute;left:544px;top:730px;width:2072px;height:2px;background:#dcdde2;"></div>
<div style="position:absolute;left:2616px;top:730px;width:198px;height:2px;background:#e4e5e9;"></div>
<div style="position:absolute;left:2816px;top:730px;width:30px;height:2px;background:#dcdde2;"></div>
<div style="position:absolute;left:1086px;top:666px;width:2px;height:44px;background:#e6e7eb;"></div>
<div style="position:absolute;left:1398px;top:666px;width:2px;height:44px;background:#e6e7eb;"></div>
<div style="position:absolute;left:1638px;top:666px;width:2px;height:44px;background:#e6e7eb;"></div>
<div style="position:absolute;left:1998px;top:666px;width:2px;height:44px;background:#e6e7eb;"></div>
<div style="position:absolute;left:2318px;top:666px;width:2px;height:44px;background:#e6e7eb;"></div>
<div style="position:absolute;left:560px;top:668px;width:40px;height:40px;background:#ffffff;box-sizing:border-box;border:2px solid #d5d5d8;border-radius:8px;"></div>
<span id="th0" style="position:absolute;top:675.90px;font:700 28px/28px 'Liberation Sans', sans-serif;color:#0a0a0a;white-space:nowrap;letter-spacing:-0.380px;left:632.30px;">SỐ ĐƠN HÀNG</span>
<span id="th1" style="position:absolute;top:675.90px;font:700 28px/28px 'Liberation Sans', sans-serif;color:#0a0a0a;white-space:nowrap;letter-spacing:-0.502px;left:1112.80px;">SẢN PHẨM</span>
<span id="th2" style="position:absolute;top:675.90px;font:700 28px/28px 'Liberation Sans', sans-serif;color:#0a0a0a;white-space:nowrap;letter-spacing:-0.398px;right:1312.92px;">TỔNG CỘNG</span>
<span id="th3" style="position:absolute;top:675.90px;font:700 28px/28px 'Liberation Sans', sans-serif;color:#0a0a0a;white-space:nowrap;letter-spacing:-0.319px;left:1664.20px;">TRẠNG THÁI</span>
<span id="th4" style="position:absolute;top:675.90px;font:700 28px/28px 'Liberation Sans', sans-serif;color:#0a0a0a;white-space:nowrap;letter-spacing:-0.040px;left:2024.00px;">THANH TOÁN</span>
<span id="th5" style="position:absolute;top:675.90px;font:700 28px/28px 'Liberation Sans', sans-serif;color:#0a0a0a;white-space:nowrap;letter-spacing:-0.300px;left:2344.40px;">KÊNH ĐIỆN TỬ</span>
<span id="th6" style="position:absolute;top:675.90px;font:700 28px/28px 'Liberation Sans', sans-serif;color:#0a0a0a;white-space:nowrap;letter-spacing:-1.461px;left:2648.80px;">THAO TÁC</span>
<div style="position:absolute;left:544px;top:732px;width:2280px;height:932px;background:#ffffff;"></div>
<div style="position:absolute;left:2824px;top:732px;width:22px;height:932px;background:#f6f7f9;"></div>
<div style="position:absolute;left:2830px;top:738px;width:12px;height:397px;background:#c8c8c8;border-radius:6px;"></div>
<div style="position:absolute;left:544px;top:912px;width:2280px;height:2px;background:#ececef;"></div>
<div style="position:absolute;left:544px;top:1134px;width:2280px;height:2px;background:#ececef;"></div>
<div style="position:absolute;left:544px;top:1356px;width:2280px;height:2px;background:#ececef;"></div>
<div style="position:absolute;left:544px;top:1578px;width:2280px;height:2px;background:#ececef;"></div>
<div style="position:absolute;left:560px;top:802px;width:40px;height:40px;background:#ffffff;box-sizing:border-box;border:2px solid #d5d5d8;border-radius:8px;"></div>
<span id="num0" style="position:absolute;top:809.50px;font:700 28px/28px 'Liberation Sans', sans-serif;color:#0f172a;white-space:nowrap;letter-spacing:0.212px;left:631.50px;">ORD-20260303-00005151</span>
<svg style="position:absolute;left:1114px;top:792px;overflow:visible;" width="60" height="64" viewBox="0 0 60 64"><defs><clipPath id="rc"><rect x="0" y="0" width="60" height="64" rx="8"/></clipPath></defs><g clip-path="url(#rc)">
<rect width="60" height="64" fill="#958d82"/><rect x="34" y="5" width="26" height="36" fill="#a59d92"/><rect x="0" y="0" width="60" height="5" fill="#cdc8c0"/>
<rect x="0" y="2" width="7" height="33" fill="#3d4246"/><rect x="2" y="4" width="4" height="29" fill="#d5d8d9"/><rect x="7" y="2" width="6" height="33" fill="#d7d0c4"/>
<rect x="21" y="4" width="12" height="34" fill="#6b5440"/><rect x="22" y="14" width="10" height="2" fill="#8a735c"/>
<rect x="36" y="21" width="20" height="11" fill="#141414"/><rect x="30" y="38" width="30" height="6" fill="#e6e2da"/>
<rect x="0" y="34" width="16" height="23" fill="#d6d1c8"/><rect x="1" y="33" width="6" height="6" fill="#2f4d66"/><rect x="11" y="33" width="6" height="6" fill="#2f4d66"/>
<rect x="33" y="41" width="22" height="13" fill="#7a5636"/><rect x="12" y="53" width="48" height="8" fill="#b7b1a8"/><rect x="0" y="61" width="60" height="3" fill="#6d4127"/>
<rect x="40" y="36" width="6" height="6" fill="#5f7a4a"/>
<circle cx="22.5" cy="12" r="4" fill="#7d5a48"/><path d="M18.5 10 Q22.5 5 26.5 10 Z" fill="#1e1e1e"/>
<path d="M16 19 H30 L29.5 42 H16.5 Z" fill="#ecebe8"/><rect x="13" y="26" width="20" height="5" rx="2" fill="#a27b62"/>
<rect x="16" y="42" width="15" height="22" fill="#3e3e40"/><rect x="23" y="46" width="1" height="18" fill="#2a2a2c"/></g></svg>
<span id="pr0" style="position:absolute;top:809.80px;font:400 28px/28px 'Liberation Sans', sans-serif;color:#0f172a;white-space:nowrap;letter-spacing:-0.307px;right:1317.53px;"><span style="display:inline;text-decoration:underline;text-decoration-thickness:2px;text-underline-offset:4px">đ</span>71,001</span>
<div style="position:absolute;left:1664px;top:798px;width:170px;height:48px;background:#fbf4ea;border-radius:9px;"></div>
<div style="position:absolute;left:1680px;top:812px;width:20px;height:20px;background:#dc9036;border-radius:50%;"></div>
<span id="st0" style="position:absolute;top:810.08px;font:700 24px/24px 'Liberation Sans', sans-serif;color:#dc9035;white-space:nowrap;letter-spacing:-0.661px;left:1709.00px;">Chờ xử lý</span>
<div style="position:absolute;left:2024px;top:780px;width:254px;height:48px;background:#fde8e8;border-radius:9px;"></div>
<div style="position:absolute;left:2040px;top:796px;width:17px;height:17px;background:#e04848;border-radius:50%;"></div>
<span id="pay0" style="position:absolute;top:792.68px;font:700 24px/24px 'Liberation Sans', sans-serif;color:#dc4a4a;white-space:nowrap;letter-spacing:0.373px;left:2064.80px;">Chưa thanh toán</span>
<span id="sub0" style="position:absolute;top:837.98px;font:400 22px/22px 'Liberation Sans', sans-serif;color:#8d9bb4;white-space:nowrap;letter-spacing:0.734px;left:2027.60px;">Prepaid</span>
<span id="gtg1" style="position:absolute;top:807.69px;font:700 11px/11px 'Liberation Sans', sans-serif;color:#111827;white-space:nowrap;letter-spacing:0.000px;left:2368.00px;transform:translateX(-50%);">GTG</span>
<div style="position:absolute;left:2354px;top:820px;width:28px;height:15px;background:#2458dc;border-radius:3px;"></div>
<span id="gtg2" style="position:absolute;top:824.03px;font:700 10px/10px 'Liberation Sans', sans-serif;color:#ffffff;white-space:nowrap;letter-spacing:0.000px;left:2368.00px;transform:translateX(-50%);">CRM</span>
<span id="ch0" style="position:absolute;top:809.30px;font:400 28px/28px 'Liberation Sans', sans-serif;color:#0f172a;white-space:nowrap;letter-spacing:-1.664px;left:2408.30px;">GTG CRM</span>
<svg style="position:absolute;left:2685px;top:818px;overflow:visible;" width="30" height="8" viewBox="0 0 30 8"><circle cx="3.5" cy="4" r="3.3" fill="#000"/><circle cx="15" cy="4" r="3.3" fill="#000"/><circle cx="26.5" cy="4" r="3.3" fill="#000"/></svg>
<div style="position:absolute;left:560px;top:1003px;width:40px;height:40px;background:#ffffff;box-sizing:border-box;border:2px solid #d5d5d8;border-radius:8px;"></div>
<span id="num1" style="position:absolute;top:1010.50px;font:700 28px/28px 'Liberation Sans', sans-serif;color:#0f172a;white-space:nowrap;letter-spacing:-0.997px;left:632.50px;">SHOPEE-2602195PA7AGUJ</span>
<svg style="position:absolute;left:1117px;top:994px;overflow:visible;" width="54" height="64" viewBox="0 0 54 64"><rect x="0" y="0" width="54" height="30" fill="#e4e4e2"/>
<path d="M4 22 L8 9 L12 8 L13 24 L8 26 Z" fill="#f7f7f7"/><path d="M6 20 L9 14 L10 20 Z" fill="#6aa0c0"/>
<path d="M10 6 L17 4 L20 8 L16 13 L21 20 L17 24 L12 18 Z" fill="#24304d"/><path d="M12 10 L18 9 M13 14 L19 13" stroke="#f0f0f0" stroke-width="1.5"/>
<path d="M19 24 L26 16 L31 20 L28 27 L21 28 Z" fill="#1f2b4a"/>
<path d="M27 22 L31 10 L37 5 L44 8 L42 22 L34 27 Z" fill="#b4aca2"/><path d="M31 16 L42 12 M31 20 L41 16 M32 24 L40 20" stroke="#4f6a95" stroke-width="1.8"/>
<path d="M33 6 L38 2 L44 3 L45 8 L40 12 Z" fill="#1f2b4a"/><path d="M42 10 L50 9 L52 14 L47 18 L43 17 Z" fill="#2c3858"/>
<rect x="0" y="34" width="26" height="30" fill="#8b8f92"/><rect x="28" y="34" width="26" height="30" fill="#9a9ea0"/>
<path d="M1 34 H9 L10 46 L3 47 Z M12 34 H21 L20 48 L13 47 Z" fill="#1c2740"/><path d="M1 50 L9 48 L12 56 L4 59 Z" fill="#6f93b8"/><path d="M13 52 L21 50 L24 58 L16 60 Z" fill="#5c7ea6"/>
<path d="M0 58 H26 V64 H0 Z" fill="#6e7378"/><path d="M40 34 H54 V50 L46 48 Z" fill="#1c2740"/>
<path d="M32 40 L40 37 L42 43 L35 46 Z" fill="#efefef"/><path d="M31 43 L35 42 L36 46 L32 47 Z" fill="#7fb0dd"/><path d="M37 54 L45 52 L46 60 L38 61 Z" fill="#f2f2f2"/><path d="M37 59 L46 58 L46 63 L37 63 Z" fill="#7fb0dd"/></svg>
<span id="pr1" style="position:absolute;top:1010.80px;font:400 28px/28px 'Liberation Sans', sans-serif;color:#0f172a;white-space:nowrap;letter-spacing:0.493px;right:1311.93px;"><span style="display:inline;text-decoration:underline;text-decoration-thickness:2px;text-underline-offset:4px">đ</span>71,500</span>
<div style="position:absolute;left:1664px;top:999px;width:200px;height:48px;background:#fdf0e8;border-radius:9px;"></div>
<div style="position:absolute;left:1680px;top:1013px;width:20px;height:20px;background:#ea7a35;border-radius:50%;"></div>
<span id="st1" style="position:absolute;top:1011.08px;font:700 24px/24px 'Liberation Sans', sans-serif;color:#e8773a;white-space:nowrap;letter-spacing:0.070px;left:1709.00px;">Chờ liên kết</span>
<div style="position:absolute;left:2024px;top:962px;width:272px;height:88px;background:#fdf6ec;border-radius:10px;"></div>
<div style="position:absolute;left:2040px;top:998px;width:16px;height:16px;background:#e5a03b;border-radius:50%;"></div>
<span id="pay1" style="position:absolute;top:974.48px;font:700 24px/24px 'Liberation Sans', sans-serif;color:#e59f3b;white-space:nowrap;letter-spacing:-0.242px;left:2064.00px;">COD đang chờ xử</span>
<span id="payb1" style="position:absolute;top:1014.58px;font:700 24px/24px 'Liberation Sans', sans-serif;color:#e59f3b;white-space:nowrap;letter-spacing:0.000px;left:2063.00px;">lý</span>
<span id="sub1" style="position:absolute;top:1060.18px;font:400 22px/22px 'Liberation Sans', sans-serif;color:#8d9bb4;white-space:nowrap;letter-spacing:0.247px;left:2027.70px;">Cash On Delivery</span>
<svg style="position:absolute;left:2344px;top:999px;overflow:visible;" width="48" height="48" viewBox="0 0 48 48"><circle cx="24" cy="24" r="24" fill="#e95e34"/><path d="M18.5 17 Q18.5 8.5 24 8.5 Q29.5 8.5 29.5 17" fill="none" stroke="#fff" stroke-width="1.8"/><path d="M10 17 H38 L36.5 37.5 Q36 39.5 34 39.5 H14 Q12 39.5 11.5 37.5 Z" fill="#fff"/><path d="M27.5 22.5 Q25.5 20.5 23 21 Q19.5 21.8 20.5 25 Q21.5 27.5 24.5 28.5 Q28 30 27.5 33 Q26.5 36 23 35.5 Q20.5 35 19.5 33.5" fill="none" stroke="#e95e34" stroke-width="1.5" stroke-linecap="round"/></svg>
<span id="ch1" style="position:absolute;top:1010.30px;font:400 28px/28px 'Liberation Sans', sans-serif;color:#0f172a;white-space:nowrap;letter-spacing:0.607px;left:2407.00px;">Shopee</span>
<svg style="position:absolute;left:2685px;top:1019px;overflow:visible;" width="30" height="8" viewBox="0 0 30 8"><circle cx="3.5" cy="4" r="3.3" fill="#000"/><circle cx="15" cy="4" r="3.3" fill="#000"/><circle cx="26.5" cy="4" r="3.3" fill="#000"/></svg>
<div style="position:absolute;left:560px;top:1225px;width:40px;height:40px;background:#ffffff;box-sizing:border-box;border:2px solid #d5d5d8;border-radius:8px;"></div>
<span id="num2" style="position:absolute;top:1232.50px;font:700 28px/28px 'Liberation Sans', sans-serif;color:#0f172a;white-space:nowrap;letter-spacing:-0.579px;left:632.50px;">SHOPEE-2602195FFH9XVQ</span>
<svg style="position:absolute;left:1117px;top:1216px;overflow:visible;" width="54" height="64" viewBox="0 0 54 64"><rect x="0" y="0" width="54" height="30" fill="#e4e4e2"/>
<path d="M4 22 L8 9 L12 8 L13 24 L8 26 Z" fill="#f7f7f7"/><path d="M6 20 L9 14 L10 20 Z" fill="#6aa0c0"/>
<path d="M10 6 L17 4 L20 8 L16 13 L21 20 L17 24 L12 18 Z" fill="#24304d"/><path d="M12 10 L18 9 M13 14 L19 13" stroke="#f0f0f0" stroke-width="1.5"/>
<path d="M19 24 L26 16 L31 20 L28 27 L21 28 Z" fill="#1f2b4a"/>
<path d="M27 22 L31 10 L37 5 L44 8 L42 22 L34 27 Z" fill="#b4aca2"/><path d="M31 16 L42 12 M31 20 L41 16 M32 24 L40 20" stroke="#4f6a95" stroke-width="1.8"/>
<path d="M33 6 L38 2 L44 3 L45 8 L40 12 Z" fill="#1f2b4a"/><path d="M42 10 L50 9 L52 14 L47 18 L43 17 Z" fill="#2c3858"/>
<rect x="0" y="34" width="26" height="30" fill="#8b8f92"/><rect x="28" y="34" width="26" height="30" fill="#9a9ea0"/>
<path d="M1 34 H9 L10 46 L3 47 Z M12 34 H21 L20 48 L13 47 Z" fill="#1c2740"/><path d="M1 50 L9 48 L12 56 L4 59 Z" fill="#6f93b8"/><path d="M13 52 L21 50 L24 58 L16 60 Z" fill="#5c7ea6"/>
<path d="M0 58 H26 V64 H0 Z" fill="#6e7378"/><path d="M40 34 H54 V50 L46 48 Z" fill="#1c2740"/>
<path d="M32 40 L40 37 L42 43 L35 46 Z" fill="#efefef"/><path d="M31 43 L35 42 L36 46 L32 47 Z" fill="#7fb0dd"/><path d="M37 54 L45 52 L46 60 L38 61 Z" fill="#f2f2f2"/><path d="M37 59 L46 58 L46 63 L37 63 Z" fill="#7fb0dd"/></svg>
<span id="pr2" style="position:absolute;top:1232.80px;font:400 28px/28px 'Liberation Sans', sans-serif;color:#0f172a;white-space:nowrap;letter-spacing:0.493px;right:1311.93px;"><span style="display:inline;text-decoration:underline;text-decoration-thickness:2px;text-underline-offset:4px">đ</span>71,500</span>
<div style="position:absolute;left:1664px;top:1221px;width:200px;height:48px;background:#fdf0e8;border-radius:9px;"></div>
<div style="position:absolute;left:1680px;top:1235px;width:20px;height:20px;background:#ea7a35;border-radius:50%;"></div>
<span id="st2" style="position:absolute;top:1233.08px;font:700 24px/24px 'Liberation Sans', sans-serif;color:#e8773a;white-space:nowrap;letter-spacing:0.070px;left:1709.00px;">Chờ liên kết</span>
<div style="position:absolute;left:2024px;top:1184px;width:272px;height:88px;background:#fdf6ec;border-radius:10px;"></div>
<div style="position:absolute;left:2040px;top:1220px;width:16px;height:16px;background:#e5a03b;border-radius:50%;"></div>
<span id="pay2" style="position:absolute;top:1196.48px;font:700 24px/24px 'Liberation Sans', sans-serif;color:#e59f3b;white-space:nowrap;letter-spacing:-0.242px;left:2064.00px;">COD đang chờ xử</span>
<span id="payb2" style="position:absolute;top:1236.58px;font:700 24px/24px 'Liberation Sans', sans-serif;color:#e59f3b;white-space:nowrap;letter-spacing:0.000px;left:2063.00px;">lý</span>
<span id="sub2" style="position:absolute;top:1282.18px;font:400 22px/22px 'Liberation Sans', sans-serif;color:#8d9bb4;white-space:nowrap;letter-spacing:0.247px;left:2027.70px;">Cash On Delivery</span>
<svg style="position:absolute;left:2344px;top:1221px;overflow:visible;" width="48" height="48" viewBox="0 0 48 48"><circle cx="24" cy="24" r="24" fill="#e95e34"/><path d="M18.5 17 Q18.5 8.5 24 8.5 Q29.5 8.5 29.5 17" fill="none" stroke="#fff" stroke-width="1.8"/><path d="M10 17 H38 L36.5 37.5 Q36 39.5 34 39.5 H14 Q12 39.5 11.5 37.5 Z" fill="#fff"/><path d="M27.5 22.5 Q25.5 20.5 23 21 Q19.5 21.8 20.5 25 Q21.5 27.5 24.5 28.5 Q28 30 27.5 33 Q26.5 36 23 35.5 Q20.5 35 19.5 33.5" fill="none" stroke="#e95e34" stroke-width="1.5" stroke-linecap="round"/></svg>
<span id="ch2" style="position:absolute;top:1232.30px;font:400 28px/28px 'Liberation Sans', sans-serif;color:#0f172a;white-space:nowrap;letter-spacing:0.607px;left:2407.00px;">Shopee</span>
<svg style="position:absolute;left:2685px;top:1241px;overflow:visible;" width="30" height="8" viewBox="0 0 30 8"><circle cx="3.5" cy="4" r="3.3" fill="#000"/><circle cx="15" cy="4" r="3.3" fill="#000"/><circle cx="26.5" cy="4" r="3.3" fill="#000"/></svg>
<div style="position:absolute;left:560px;top:1447px;width:40px;height:40px;background:#ffffff;box-sizing:border-box;border:2px solid #d5d5d8;border-radius:8px;"></div>
<span id="num3" style="position:absolute;top:1454.50px;font:700 28px/28px 'Liberation Sans', sans-serif;color:#0f172a;white-space:nowrap;letter-spacing:-0.579px;left:632.50px;">SHOPEE-2602195FFH9XVQ</span>
<svg style="position:absolute;left:1117px;top:1438px;overflow:visible;" width="54" height="64" viewBox="0 0 54 64"><rect x="0" y="0" width="54" height="30" fill="#e4e4e2"/>
<path d="M4 22 L8 9 L12 8 L13 24 L8 26 Z" fill="#f7f7f7"/><path d="M6 20 L9 14 L10 20 Z" fill="#6aa0c0"/>
<path d="M10 6 L17 4 L20 8 L16 13 L21 20 L17 24 L12 18 Z" fill="#24304d"/><path d="M12 10 L18 9 M13 14 L19 13" stroke="#f0f0f0" stroke-width="1.5"/>
<path d="M19 24 L26 16 L31 20 L28 27 L21 28 Z" fill="#1f2b4a"/>
<path d="M27 22 L31 10 L37 5 L44 8 L42 22 L34 27 Z" fill="#b4aca2"/><path d="M31 16 L42 12 M31 20 L41 16 M32 24 L40 20" stroke="#4f6a95" stroke-width="1.8"/>
<path d="M33 6 L38 2 L44 3 L45 8 L40 12 Z" fill="#1f2b4a"/><path d="M42 10 L50 9 L52 14 L47 18 L43 17 Z" fill="#2c3858"/>
<rect x="0" y="34" width="26" height="30" fill="#8b8f92"/><rect x="28" y="34" width="26" height="30" fill="#9a9ea0"/>
<path d="M1 34 H9 L10 46 L3 47 Z M12 34 H21 L20 48 L13 47 Z" fill="#1c2740"/><path d="M1 50 L9 48 L12 56 L4 59 Z" fill="#6f93b8"/><path d="M13 52 L21 50 L24 58 L16 60 Z" fill="#5c7ea6"/>
<path d="M0 58 H26 V64 H0 Z" fill="#6e7378"/><path d="M40 34 H54 V50 L46 48 Z" fill="#1c2740"/>
<path d="M32 40 L40 37 L42 43 L35 46 Z" fill="#efefef"/><path d="M31 43 L35 42 L36 46 L32 47 Z" fill="#7fb0dd"/><path d="M37 54 L45 52 L46 60 L38 61 Z" fill="#f2f2f2"/><path d="M37 59 L46 58 L46 63 L37 63 Z" fill="#7fb0dd"/></svg>
<span id="pr3" style="position:absolute;top:1454.80px;font:400 28px/28px 'Liberation Sans', sans-serif;color:#0f172a;white-space:nowrap;letter-spacing:0.493px;right:1311.93px;"><span style="display:inline;text-decoration:underline;text-decoration-thickness:2px;text-underline-offset:4px">đ</span>71,500</span>
<div style="position:absolute;left:1664px;top:1443px;width:200px;height:48px;background:#fdf0e8;border-radius:9px;"></div>
<div style="position:absolute;left:1680px;top:1457px;width:20px;height:20px;background:#ea7a35;border-radius:50%;"></div>
<span id="st3" style="position:absolute;top:1455.08px;font:700 24px/24px 'Liberation Sans', sans-serif;color:#e8773a;white-space:nowrap;letter-spacing:0.070px;left:1709.00px;">Chờ liên kết</span>
<div style="position:absolute;left:2024px;top:1406px;width:272px;height:88px;background:#fdf6ec;border-radius:10px;"></div>
<div style="position:absolute;left:2040px;top:1442px;width:16px;height:16px;background:#e5a03b;border-radius:50%;"></div>
<span id="pay3" style="position:absolute;top:1418.48px;font:700 24px/24px 'Liberation Sans', sans-serif;color:#e59f3b;white-space:nowrap;letter-spacing:-0.242px;left:2064.00px;">COD đang chờ xử</span>
<span id="payb3" style="position:absolute;top:1458.58px;font:700 24px/24px 'Liberation Sans', sans-serif;color:#e59f3b;white-space:nowrap;letter-spacing:0.000px;left:2063.00px;">lý</span>
<span id="sub3" style="position:absolute;top:1504.18px;font:400 22px/22px 'Liberation Sans', sans-serif;color:#8d9bb4;white-space:nowrap;letter-spacing:0.247px;left:2027.70px;">Cash On Delivery</span>
<svg style="position:absolute;left:2344px;top:1443px;overflow:visible;" width="48" height="48" viewBox="0 0 48 48"><circle cx="24" cy="24" r="24" fill="#e95e34"/><path d="M18.5 17 Q18.5 8.5 24 8.5 Q29.5 8.5 29.5 17" fill="none" stroke="#fff" stroke-width="1.8"/><path d="M10 17 H38 L36.5 37.5 Q36 39.5 34 39.5 H14 Q12 39.5 11.5 37.5 Z" fill="#fff"/><path d="M27.5 22.5 Q25.5 20.5 23 21 Q19.5 21.8 20.5 25 Q21.5 27.5 24.5 28.5 Q28 30 27.5 33 Q26.5 36 23 35.5 Q20.5 35 19.5 33.5" fill="none" stroke="#e95e34" stroke-width="1.5" stroke-linecap="round"/></svg>
<span id="ch3" style="position:absolute;top:1454.30px;font:400 28px/28px 'Liberation Sans', sans-serif;color:#0f172a;white-space:nowrap;letter-spacing:0.607px;left:2407.00px;">Shopee</span>
<svg style="position:absolute;left:2685px;top:1463px;overflow:visible;" width="30" height="8" viewBox="0 0 30 8"><circle cx="3.5" cy="4" r="3.3" fill="#000"/><circle cx="15" cy="4" r="3.3" fill="#000"/><circle cx="26.5" cy="4" r="3.3" fill="#000"/></svg>
<svg style="position:absolute;left:1117px;top:1660px;overflow:visible;" width="54" height="64" viewBox="0 0 54 64"><rect x="0" y="0" width="54" height="30" fill="#e4e4e2"/>
<path d="M4 22 L8 9 L12 8 L13 24 L8 26 Z" fill="#f7f7f7"/><path d="M6 20 L9 14 L10 20 Z" fill="#6aa0c0"/>
<path d="M10 6 L17 4 L20 8 L16 13 L21 20 L17 24 L12 18 Z" fill="#24304d"/><path d="M12 10 L18 9 M13 14 L19 13" stroke="#f0f0f0" stroke-width="1.5"/>
<path d="M19 24 L26 16 L31 20 L28 27 L21 28 Z" fill="#1f2b4a"/>
<path d="M27 22 L31 10 L37 5 L44 8 L42 22 L34 27 Z" fill="#b4aca2"/><path d="M31 16 L42 12 M31 20 L41 16 M32 24 L40 20" stroke="#4f6a95" stroke-width="1.8"/>
<path d="M33 6 L38 2 L44 3 L45 8 L40 12 Z" fill="#1f2b4a"/><path d="M42 10 L50 9 L52 14 L47 18 L43 17 Z" fill="#2c3858"/>
<rect x="0" y="34" width="26" height="30" fill="#8b8f92"/><rect x="28" y="34" width="26" height="30" fill="#9a9ea0"/>
<path d="M1 34 H9 L10 46 L3 47 Z M12 34 H21 L20 48 L13 47 Z" fill="#1c2740"/><path d="M1 50 L9 48 L12 56 L4 59 Z" fill="#6f93b8"/><path d="M13 52 L21 50 L24 58 L16 60 Z" fill="#5c7ea6"/>
<path d="M0 58 H26 V64 H0 Z" fill="#6e7378"/><path d="M40 34 H54 V50 L46 48 Z" fill="#1c2740"/>
<path d="M32 40 L40 37 L42 43 L35 46 Z" fill="#efefef"/><path d="M31 43 L35 42 L36 46 L32 47 Z" fill="#7fb0dd"/><path d="M37 54 L45 52 L46 60 L38 61 Z" fill="#f2f2f2"/><path d="M37 59 L46 58 L46 63 L37 63 Z" fill="#7fb0dd"/></svg>
<div style="position:absolute;left:2024px;top:1628px;width:272px;height:88px;background:#fdf6ec;border-radius:10px;"></div>
<span id="pay4" style="position:absolute;top:1643.48px;font:700 24px/24px 'Liberation Sans', sans-serif;color:#e59f3b;white-space:nowrap;letter-spacing:-0.242px;left:2064.00px;">COD đang chờ xử</span>
<div style="position:absolute;left:2910px;top:214px;width:1px;height:1450px;background:#e6e6e6;"></div>
<div style="position:absolute;left:2911px;top:214px;width:17px;height:1450px;background:#f8f8f8;"></div>
<div style="position:absolute;left:2918px;top:220px;width:10px;height:1276px;background:#c1c1c1;border-radius:5px;"></div>
<div style="position:absolute;left:2788px;top:1362px;width:88px;height:88px;background:#2458dc;border-radius:50%;box-shadow:0 6px 24px rgba(0,0,0,0.18);z-index:3;"></div>
<svg style="position:absolute;left:2812px;top:1382px;overflow:visible;z-index:4;" width="40" height="48" viewBox="0 0 40 48"><g fill="none" stroke="#fff" stroke-width="3.1" stroke-linejoin="round" stroke-linecap="round"><path d="M20 2.5 L28 11.5 V33.5 H12 V11.5 Z"/><path d="M12 22.5 Q3.5 25 2.8 33.5 H12 M28 22.5 Q36.5 25 37.2 33.5 H28"/><path d="M12.5 34 L14 38.5 Q15.5 45 20 45 Q24.5 45 26 38.5 L27.5 34"/></g><circle cx="20" cy="17.5" r="2.5" fill="#fff"/></svg>
<div style="position:absolute;left:2854px;top:1356px;width:28px;height:28px;background:#c9553a;border-radius:50%;z-index:4;"></div>
<span id="badge3" style="position:absolute;top:1359.38px;font:400 22px/22px 'Liberation Sans', sans-serif;color:#ffffff;white-space:nowrap;letter-spacing:0.000px;z-index:5;left:2868.00px;transform:translateX(-50%);">3</span>
</div></body></html>
